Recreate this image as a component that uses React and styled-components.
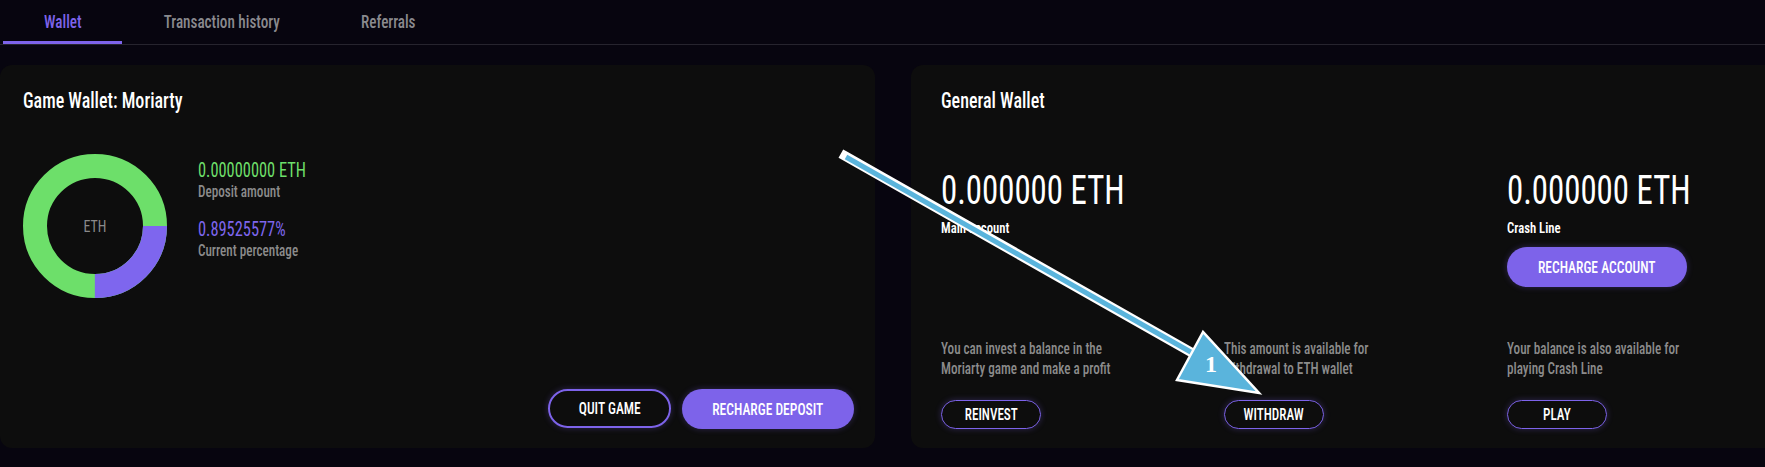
import React from "react";
import styled, { createGlobalStyle, css } from "styled-components";

const FONT = `Roboto, "Liberation Sans", sans-serif`;
const PURPLE = "#7d63ea";
const GREEN = "#6ddf6a";

/* Oswald-like proportions: condensed Roboto squeezed a little further */
const narrow = (origin = "left center") => css`
  transform: scaleX(0.82);
  transform-origin: ${origin};
`;

const Global = createGlobalStyle`
  html, body {
    margin: 0;
    padding: 0;
    background: #07050f;
    overflow: hidden;
  }
  body {
    font-family: ${FONT};
    font-stretch: 75%;
    color: #fff;
  }
  * { box-sizing: border-box; }
`;

const Page = styled.div`
  position: relative;
  width: 1765px;
  height: 467px;
  overflow: hidden;
`;

const TabBar = styled.nav`
  display: flex;
  height: 45px;
  border-bottom: 1px solid #26242e;
  padding-left: 3px;
`;

const Tab = styled.div`
  display: flex;
  align-items: center;
  justify-content: center;
  width: ${(p) => p.$w}px;
  height: 44px;
  font-size: 18.5px;
  font-weight: 500;
  color: ${(p) => (p.$active ? PURPLE : "#8a8a8e")};
  border-bottom: 3px solid ${(p) => (p.$active ? PURPLE : "transparent")};
  padding-top: 3px;
`;

const TabLabel = styled.span`
  display: inline-block;
  white-space: nowrap;
  ${narrow("center")}
`;

const Cards = styled.div`
  display: flex;
  gap: 36px;
  margin-top: 20px;
`;

const Card = styled.section`
  flex: 0 0 ${(p) => p.$w}px;
  height: 383px;
  background: #0d0d0d;
  border-radius: 12px;
  display: flex;
  flex-direction: column;
  padding: 24px ${(p) => p.$pr}px 19px ${(p) => p.$pl}px;
`;

const Title = styled.h2`
  margin: 0;
  font-size: 22px;
  line-height: 24px;
  font-weight: 500;
  color: #fff;
  white-space: nowrap;
  ${narrow()}
`;

const DepositRow = styled.div`
  display: flex;
  gap: 31px;
  margin-top: 41px;
`;

const Donut = styled.div`
  position: relative;
  width: 144px;
  height: 144px;
  flex: 0 0 auto;
`;

const DonutLabel = styled.span`
  position: absolute;
  inset: 0;
  display: flex;
  align-items: center;
  justify-content: center;
  font-size: 17px;
  color: #8a8a8a;
  ${narrow("center")}
`;

const Stats = styled.div`
  display: flex;
  flex-direction: column;
  padding-top: 4px;
`;

const StatValue = styled.div`
  font-size: 20px;
  line-height: 24px;
  color: ${(p) => p.$color};
  margin-top: ${(p) => p.$mt || 0}px;
  white-space: nowrap;
  ${narrow()}
`;

const StatLabel = styled.div`
  font-size: 16px;
  line-height: 20px;
  font-weight: 500;
  color: #8b8b8b;
  white-space: nowrap;
  ${narrow()}
`;

const Actions = styled.div`
  margin-top: auto;
  display: flex;
  justify-content: flex-end;
  gap: 11px;
`;

const Button = styled.button`
  font-family: ${FONT};
  font-stretch: 75%;
  width: ${(p) => p.$w}px;
  height: ${(p) => p.$h}px;
  border-radius: ${(p) => p.$h / 2}px;
  font-size: ${(p) => p.$fs}px;
  font-weight: 500;
  color: #fff;
  text-transform: uppercase;
  padding: 0;
  cursor: pointer;
  display: inline-flex;
  align-items: center;
  justify-content: center;
  background: ${(p) => (p.$filled ? PURPLE : "transparent")};
  border: ${(p) => (p.$filled ? "none" : `${p.$bw}px solid ${PURPLE}`)};
  box-shadow: 0 0 6px rgba(125, 99, 234, 0.3);
`;

const ButtonLabel = styled.span`
  display: inline-block;
  white-space: nowrap;
  ${narrow("center")}
`;

const Columns = styled.div`
  display: grid;
  grid-template-columns: repeat(3, 283px);
  margin-top: ${(p) => p.$mt || 0}px;
`;

const BottomColumns = styled(Columns)`
  margin-top: auto;
`;

const Column = styled.div`
  display: flex;
  flex-direction: column;
  align-items: flex-start;
`;

const BigAmount = styled.div`
  font-size: 40px;
  line-height: 44px;
  font-weight: 400;
  color: #fff;
  white-space: nowrap;
  ${narrow()}
`;

const AmountLabel = styled.div`
  font-size: 15.5px;
  line-height: 18px;
  font-weight: 600;
  color: #fff;
  margin-top: 6px;
  margin-bottom: 10px;
  white-space: nowrap;
  ${narrow()}
`;

const Desc = styled.p`
  margin: 0 0 21px;
  font-size: 16px;
  line-height: 20px;
  font-weight: 500;
  color: #8b8b8b;
  white-space: nowrap;
  ${narrow()}
`;

const Overlay = styled.svg`
  position: absolute;
  left: 0;
  top: 0;
  pointer-events: none;
`;

const R = 60;
const C = 2 * Math.PI * R;

function Ring() {
  return (
    <svg width="144" height="144" viewBox="0 0 144 144">
      <circle cx="72" cy="72" r={R} fill="none" stroke={GREEN} strokeWidth="24" />
      <circle
        cx="72"
        cy="72"
        r={R}
        fill="none"
        stroke="#7e66ee"
        strokeWidth="24"
        strokeDasharray={`${C * 0.25} ${C}`}
      />
    </svg>
  );
}

function Arrow() {
  return (
    <Overlay width="1765" height="467" viewBox="0 0 1765 467">
      <line x1="845" y1="156" x2="1196" y2="355" stroke="#fff" strokeWidth="9.5" strokeLinecap="square" />
      <line x1="846" y1="157" x2="1196" y2="355" stroke="#5ab4dc" strokeWidth="5" />
      <polygon points="1203,332 1177,380 1259,393" fill="#5ab4dc" stroke="#fff" strokeWidth="2.5" strokeLinejoin="miter" />
      <text x="1205" y="372" fill="#fff" fontFamily="'Liberation Serif', serif" fontWeight="700" fontSize="24">1</text>
    </Overlay>
  );
}

const Btn = ({ children, ...rest }) => (
  <Button {...rest}>
    <ButtonLabel>{children}</ButtonLabel>
  </Button>
);

export default function App() {
  return (
    <Page>
      <Global />
      <TabBar>
        <Tab $w={119} $active><TabLabel>Wallet</TabLabel></Tab>
        <Tab $w={200}><TabLabel>Transaction history</TabLabel></Tab>
        <Tab $w={133}><TabLabel>Referrals</TabLabel></Tab>
      </TabBar>
      <Cards>
        <Card $w={875} $pl={23} $pr={21}>
          <Title>Game Wallet: Moriarty</Title>
          <DepositRow>
            <Donut>
              <Ring />
              <DonutLabel>ETH</DonutLabel>
            </Donut>
            <Stats>
              <StatValue $color={GREEN}>0.00000000 ETH</StatValue>
              <StatLabel>Deposit amount</StatLabel>
              <StatValue $color="#7e66ee" $mt={15}>0.89525577%</StatValue>
              <StatLabel>Current percentage</StatLabel>
            </Stats>
          </DepositRow>
          <Actions>
            <Btn $w={123} $h={39} $fs={16.5} $bw={2}>Quit game</Btn>
            <Btn $w={172} $h={40} $fs={16.5} $filled>Recharge deposit</Btn>
          </Actions>
        </Card>
        <Card $w={900} $pl={30} $pr={30}>
          <Title>General Wallet</Title>
          <Columns $mt={56}>
            <Column>
              <BigAmount>0.000000 ETH</BigAmount>
              <AmountLabel>Main account</AmountLabel>
            </Column>
            <Column />
            <Column>
              <BigAmount>0.000000 ETH</BigAmount>
              <AmountLabel>Crash Line</AmountLabel>
              <Btn $w={180} $h={40} $fs={16.5} $filled>Recharge account</Btn>
            </Column>
          </Columns>
          <BottomColumns>
            <Column>
              <Desc>You can invest a balance in the<br />Moriarty game and make a profit</Desc>
              <Btn $w={100} $h={29} $fs={16} $bw={1.5}>Reinvest</Btn>
            </Column>
            <Column>
              <Desc>This amount is available for<br />withdrawal to ETH wallet</Desc>
              <Btn $w={100} $h={29} $fs={16} $bw={1.5}>Withdraw</Btn>
            </Column>
            <Column>
              <Desc>Your balance is also available for<br />playing Crash Line</Desc>
              <Btn $w={100} $h={29} $fs={16} $bw={1.5}>Play</Btn>
            </Column>
          </BottomColumns>
        </Card>
      </Cards>
      <Arrow />
    </Page>
  );
}
